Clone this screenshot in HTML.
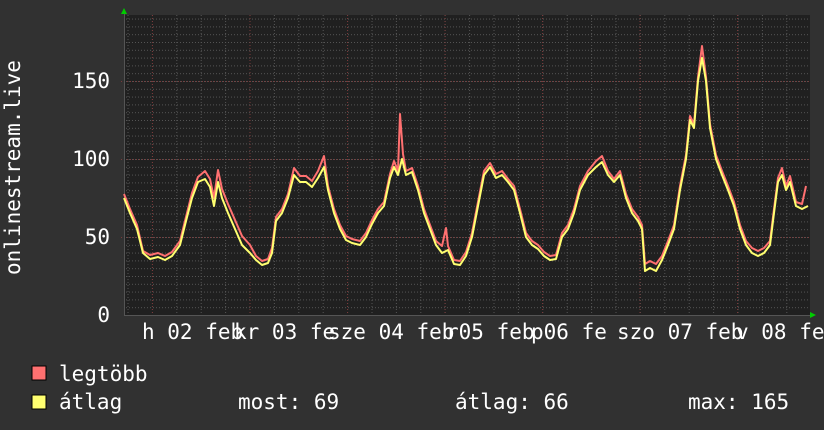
<!DOCTYPE html>
<html><head><meta charset="utf-8"><style>
html,body{margin:0;padding:0;background:#313131;}
svg{display:block}
text{font-family:"DejaVu Sans Mono","Liberation Mono",monospace;font-size:21px;fill:#fff}
</style></head><body>
<svg width="824" height="430" viewBox="0 0 824 430" xmlns="http://www.w3.org/2000/svg">
<rect width="824" height="430" fill="#313131"/>
<rect x="124" y="15" width="686" height="300" fill="#202020"/>
<defs>
<pattern id="vmin" x="127.5" y="0" width="24.4" height="430" patternUnits="userSpaceOnUse"><line x1="0.5" y1="0" x2="0.5" y2="430" stroke="#555" stroke-dasharray="1,2"/></pattern>
<pattern id="hmin" x="0" y="315" width="824" height="7.8" patternUnits="userSpaceOnUse"><line x1="0" y1="0.5" x2="824" y2="0.5" stroke="#555" stroke-dasharray="1,2"/></pattern>
</defs>
<rect x="124" y="15" width="686" height="300" fill="url(#vmin)"/>
<rect x="124" y="15" width="686" height="300" fill="url(#hmin)"/>
<g stroke="#7a3a3a" stroke-dasharray="1,2">
<line x1="152.5" y1="15" x2="152.5" y2="318"/><line x1="250" y1="15" x2="250" y2="318"/><line x1="347.5" y1="15" x2="347.5" y2="318"/><line x1="445" y1="15" x2="445" y2="318"/><line x1="542.5" y1="15" x2="542.5" y2="318"/><line x1="640" y1="15" x2="640" y2="318"/><line x1="737.5" y1="15" x2="737.5" y2="318"/>
<line x1="121" y1="237.5" x2="810" y2="237.5"/><line x1="121" y1="159.5" x2="810" y2="159.5"/><line x1="121" y1="81.5" x2="810" y2="81.5"/>
</g>
<line x1="124" y1="315.5" x2="812" y2="315.5" stroke="#555"/>
<line x1="124.5" y1="12" x2="124.5" y2="315" stroke="#555"/>
<polygon points="121,14 127,14 124,8" fill="#0c0"/>
<polygon points="810,312 810,318 816,315" fill="#0c0"/>
<g fill="none" stroke-width="2" stroke-linejoin="round">
<polyline stroke="#ff7070" transform="translate(0,-4)" points="124,198 130,213 137,229 143,255 150,259 158,257 165,260 172,256 180,245 186,221 192,197 198,181 205,175 210,183 214,202 218,174 222,193 228,208 235,224 242,240 250,249 256,260 262,265 268,263 272,252 276,221 282,213 288,198 294,172 300,180 306,180 312,185 318,175 324,160 328,190 334,213 340,229 346,240 352,243 360,245 366,237 372,224 378,213 384,206 390,178 394,165 398,175 400,118 403,158 406,175 412,172 418,190 424,213 430,229 436,245 442,250 446,232 448,250 454,264 460,265 466,256 472,237 478,206 484,175 490,167 496,178 502,175 508,183 514,190 520,213 526,237 532,245 538,249 544,256 550,260 556,259 562,237 568,229 574,213 580,190 588,175 596,165 602,160 608,175 614,183 620,175 626,198 632,213 638,221 642,229 645,268 650,265 656,268 662,260 668,245 674,229 680,190 686,159 690,120 694,128 698,81 702,50 706,81 710,128 716,159 722,175 728,190 734,206 740,229 746,245 752,252 758,255 764,252 770,245 774,213 778,182 782,172 786,190 790,180 796,206 802,208 806,190"/>
<polyline stroke="#ffff70" points="124,198 130,213 137,229 143,253 150,259 158,257 165,260 172,256 180,245 186,221 192,198 198,182 205,179 210,187 214,206 218,182 222,198 228,213 235,229 242,245 250,253 256,260 262,265 268,263 272,253 276,221 282,213 288,198 294,175 300,182 306,182 312,187 318,178 324,167 328,190 334,213 340,229 346,240 352,243 360,245 366,237 372,224 378,213 384,206 390,178 394,167 398,175 402,159 406,175 412,172 418,190 424,213 430,229 436,245 442,253 448,250 454,264 460,265 466,256 472,237 478,206 484,175 490,167 496,178 502,175 508,182 514,190 520,213 526,237 532,245 538,249 544,256 550,260 556,259 562,237 568,229 574,213 580,190 588,175 596,167 602,162 608,175 614,182 620,175 626,198 632,213 638,221 642,229 645,271 650,268 656,271 662,260 668,245 674,229 680,190 686,159 690,120 694,128 698,81 702,58 706,81 710,128 716,159 722,175 728,190 734,206 740,229 746,245 752,253 758,256 764,253 770,245 774,213 778,182 782,175 786,190 790,182 796,206 802,209 808,206"/>
</g>
<g text-anchor="end">
<text x="110" y="88">150</text>
<text x="110" y="166">100</text>
<text x="110" y="244">50</text>
<text x="110" y="322">0</text>
</g>
<text transform="translate(20,275) rotate(-90)">onlinestream.live</text>
<g>
<text x="142" y="339">h 02 feb</text>
<text x="234" y="339">kr 03 fe</text>
<text x="328" y="339">sze 04 feb</text>
<text x="446" y="339">r05 feb</text>
<text x="531" y="339">p06 fe</text>
<text x="617" y="339">szo 07 feb</text>
<text x="736" y="339">v 08 fe</text>
</g>
<rect x="32" y="366" width="14" height="14" fill="#ff7070" stroke="#000"/>
<rect x="32" y="395" width="14" height="14" fill="#ffff70" stroke="#000"/>
<text x="59" y="381">legtöbb</text>
<text x="59" y="409">átlag</text>
<text x="238" y="409">most: 69</text>
<text x="455" y="409">átlag: 66</text>
<text x="688" y="409">max: 165</text>
</svg>
</body></html>
